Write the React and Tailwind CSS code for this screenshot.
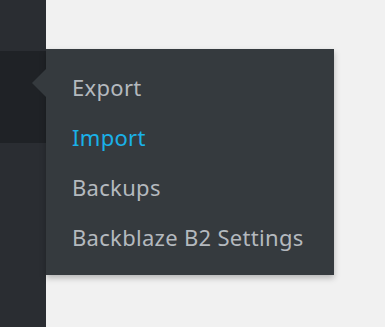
const items = [
  { label: "Export" },
  { label: "Import", current: true },
  { label: "Backups" },
  { label: "Backblaze B2 Settings" },
];

export default function App() {
  return (
    <div
      className="flex h-[327px] w-[385px] overflow-hidden bg-[#f1f1f1]"
      style={{ fontFamily: '"Noto Sans", "Open Sans", sans-serif' }}
    >
      {/* admin sidebar strip */}
      <div className="flex w-[46px] shrink-0 flex-col bg-[#2a2d32]">
        <div className="h-[51px]" />
        <div className="h-[92px] bg-[#1f2226]" />
      </div>

      {/* flyout submenu */}
      <div className="mt-[49px] self-start">
        <div className="relative w-[288px] bg-[#353a3e] py-[13px] shadow-[0_3px_6px_rgba(0,0,0,0.25)]">
          <span className="absolute left-[-14px] top-[20px] h-0 w-0 border-y-[14px] border-r-[14px] border-y-transparent border-r-[#353a3e]" />
          <ul>
            {items.map((item) => (
              <li
                key={item.label}
                className={`flex h-[50px] items-center pl-[26px] text-[22px] tracking-[0.3px] ${
                  item.current ? "text-[#1ab1e8]" : "text-[#b4b9be]"
                }`}
              >
                {item.label}
              </li>
            ))}
          </ul>
        </div>
      </div>
    </div>
  );
}
